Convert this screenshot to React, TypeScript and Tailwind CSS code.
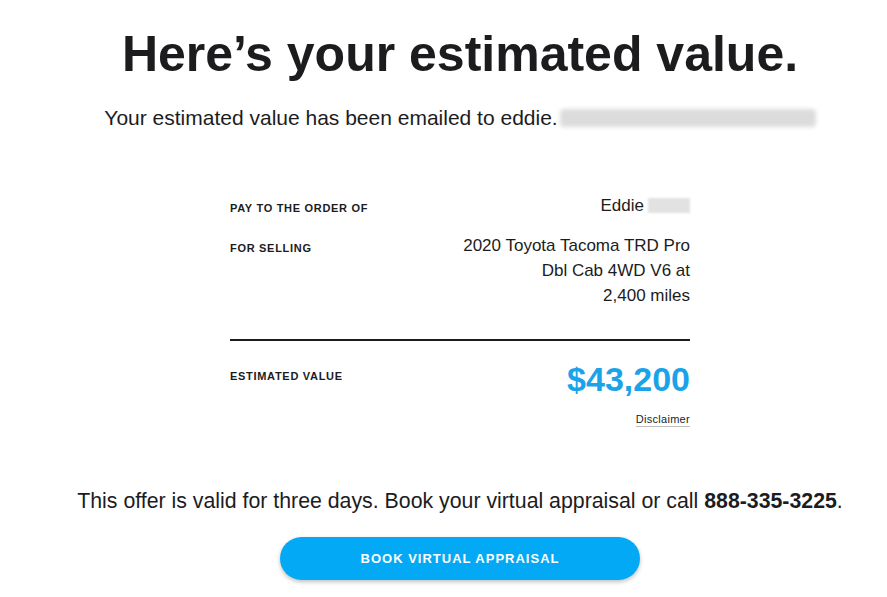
export default function App() {
  const font = { fontFamily: '"Liberation Sans", Arial, sans-serif' };
  return (
    <div className="w-full min-h-[597px] bg-white text-[#1c1c1c] pl-[33px]" style={font}>
      <div className="flex flex-col items-center">
        <h1 className="mt-[22px] text-[50px] leading-[64px] font-bold tracking-[0px] text-[#1c1c1e]">
          Here’s your estimated value.
        </h1>
        <p className="mt-[18px] flex items-center text-[21px] leading-[28px] text-[#1c1c1e]">
          <span>Your estimated value has been emailed to eddie.</span>
          <span className="ml-[2px] inline-block h-[18px] w-[256px] rounded-sm bg-[#dcdcdc] blur-[2px]" />
        </p>

        <div className="mt-[61px] w-[460px]">
          <div className="flex items-start justify-between">
            <span className="mt-[7px] text-[11px] font-bold tracking-[0.7px] text-[#1c1c1e]">PAY TO THE ORDER OF</span>
            <span className="flex items-center text-[17px] leading-[25px]">
              Eddie
              <span className="ml-[4px] inline-block h-[15px] w-[42px] bg-[#e2e2e2] blur-[1px]" />
            </span>
          </div>
          <div className="mt-[15px] flex items-start justify-between">
            <span className="mt-[7px] text-[11px] font-bold tracking-[0.7px] text-[#1c1c1e]">FOR SELLING</span>
            <span className="text-right text-[17px] leading-[25px]">
              2020 Toyota Tacoma TRD Pro
              <br />
              Dbl Cab 4WD V6 at
              <br />
              2,400 miles
            </span>
          </div>
          <div className="mt-[31px] h-[2px] w-full bg-[#1c1c1e]" />
          <div className="mt-[18px] flex items-start justify-between">
            <span className="mt-[9px] text-[11px] font-bold tracking-[0.7px] text-[#1c1c1e]">ESTIMATED VALUE</span>
            <span className="text-[34px] leading-[40px] font-bold text-[#1ba3ea]">$43,200</span>
          </div>
          <div className="mt-[13px] flex justify-end">
            <span className="border-b border-[#bdbdbd] text-[11px] leading-[14px] tracking-[0.3px] text-[#1c1c1e]">Disclaimer</span>
          </div>
        </div>

        <p className="mt-[60px] text-[21.3px] leading-[28px] text-[#1c1c1e]">
          This offer is valid for three days. Book your virtual appraisal or call <span className="font-bold">888-335-3225</span>.
        </p>
        <button className="mt-[22px] h-[43px] w-[360px] rounded-full bg-[#03a9f4] text-[13px] font-bold tracking-[1px] text-white shadow-[0_2px_4px_rgba(0,0,0,0.25)]">
          BOOK VIRTUAL APPRAISAL
        </button>
      </div>
    </div>
  );
}
